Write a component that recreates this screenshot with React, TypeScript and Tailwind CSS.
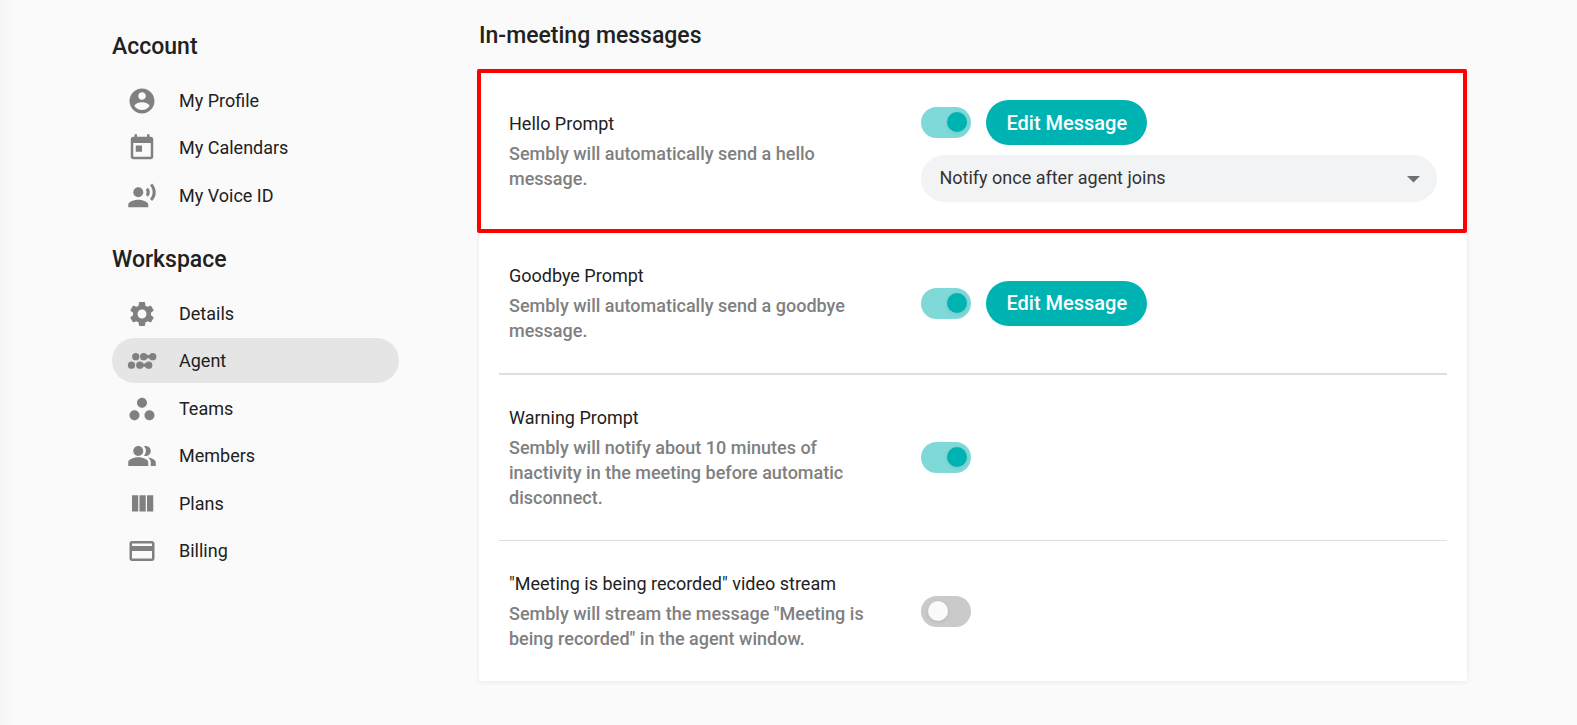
import { useState } from "react";
import type { ComponentType } from "react";
import {
  MdCreditCard,
  MdPeopleAlt,
  MdRecordVoiceOver,
  MdSettings,
  MdWorkspacesFilled,
} from "react-icons/md";

type IconProps = { className?: string };

type NavItem = {
  label: string;
  icon: ComponentType<IconProps>;
  active?: boolean;
};

function ProfileIcon({ className }: IconProps) {
  return (
    <svg viewBox="0 0 24 24" fill="currentColor" className={className}>
      <path d="M12 2C6.48 2 2 6.48 2 12s4.48 10 10 10 10-4.48 10-10S17.52 2 12 2zm0 3c1.66 0 3 1.34 3 3s-1.34 3-3 3-3-1.34-3-3 1.34-3 3-3zm0 14.2c-2.5 0-4.71-1.28-6-3.22.03-1.99 4-3.08 6-3.08 1.99 0 5.97 1.09 6 3.08-1.29 1.94-3.5 3.22-6 3.22z" />
    </svg>
  );
}

function CalendarIcon({ className }: IconProps) {
  return (
    <svg viewBox="0 0 24 24" fill="currentColor" className={className}>
      <path d="M19 3h-1V1h-2v2H8V1H6v2H5c-1.11 0-1.99.9-1.99 2L3 19c0 1.1.89 2 2 2h14c1.1 0 2-.9 2-2V5c0-1.1-.9-2-2-2zm0 16H5V8h14v11zM7 10h5v5H7z" />
    </svg>
  );
}

function AgentIcon({ className }: IconProps) {
  return (
    <svg viewBox="0 0 24 24" fill="currentColor" className={className}>
      <circle cx="7" cy="8.5" r="2.9" />
      <circle cx="13.3" cy="8.5" r="2.9" />
      <circle cx="20.6" cy="8.5" r="2.9" />
      <path d="M14.5 5.9c1 .8 1.5 1.3 2.5 1.3s1.5-.5 2.5-1.3v5.2c-1-.8-1.5-1.3-2.5-1.3s-1.5.5-2.5 1.3z" />
      <circle cx="3.6" cy="15.3" r="2.9" />
      <circle cx="10.2" cy="15.3" r="2.9" />
      <circle cx="17.4" cy="15.3" r="2.9" />
      <path d="M11.3 12.7c1 .8 1.5 1.3 2.5 1.3s1.5-.5 2.5-1.3v5.2c-1-.8-1.5-1.3-2.5-1.3s-1.5.5-2.5 1.3z" />
    </svg>
  );
}

function PlansIcon({ className }: IconProps) {
  return (
    <svg viewBox="0 0 24 24" fill="currentColor" className={className}>
      <path d="M10 18h5V5h-5v13zm-6 0h5V5H4v13zM16 5v13h5V5h-5z" />
    </svg>
  );
}

const accountItems: NavItem[] = [
  { label: "My Profile", icon: ProfileIcon },
  { label: "My Calendars", icon: CalendarIcon },
  { label: "My Voice ID", icon: MdRecordVoiceOver },
];

const workspaceItems: NavItem[] = [
  { label: "Details", icon: MdSettings },
  { label: "Agent", icon: AgentIcon, active: true },
  { label: "Teams", icon: MdWorkspacesFilled },
  { label: "Members", icon: MdPeopleAlt },
  { label: "Plans", icon: PlansIcon },
  { label: "Billing", icon: MdCreditCard },
];

function NavSection({ title, items }: { title: string; items: NavItem[] }) {
  return (
    <section>
      <h2 className="text-[23px] leading-[30px] font-medium">{title}</h2>
      <ul className="mt-4">
        {items.map(({ label, icon: Icon, active }) => (
          <li key={label} className="odd:mb-[2px] even:mb-[3px]">
            <a
              href="#"
              aria-current={active ? "page" : undefined}
              className={`flex h-[45px] items-center rounded-full pl-[15px] ${
                active ? "bg-[#e5e5e5]" : ""
              }`}
            >
              <Icon className="size-[30px] shrink-0 text-[#808080]" />
              <span className="ml-[22px] text-[18px] leading-[25px]">
                {label}
              </span>
            </a>
          </li>
        ))}
      </ul>
    </section>
  );
}

function Toggle({ label, initial }: { label: string; initial: boolean }) {
  const [on, setOn] = useState(initial);
  return (
    <input
      type="checkbox"
      role="switch"
      aria-label={label}
      checked={on}
      onChange={() => setOn(!on)}
      className="flex h-[31px] w-[50px] shrink-0 cursor-pointer appearance-none items-center rounded-full bg-[#cacaca] pb-px pl-[7px] before:size-5 before:rounded-full before:bg-[#fafafa] before:shadow-[0_1px_4px_rgba(0,0,0,0.1)] checked:bg-[#80d9d9] checked:pl-[26px] checked:before:bg-[#00b3b3]"
    />
  );
}

function EditButton() {
  return (
    <button
      type="button"
      className="h-[45px] cursor-pointer rounded-full bg-[#00b3b3] px-5 text-[20px] font-medium text-white"
    >
      Edit Message
    </button>
  );
}

type Prompt = {
  title: string;
  description: string;
  enabled: boolean;
  editable?: boolean;
  frequency?: boolean;
  highlighted?: boolean;
  row: string;
};

const prompts: Prompt[] = [
  {
    title: "Hello Prompt",
    description: "Sembly will automatically send a hello message.",
    enabled: true,
    editable: true,
    frequency: true,
    highlighted: true,
    row: "border-b",
  },
  {
    title: "Goodbye Prompt",
    description: "Sembly will automatically send a goodbye message.",
    enabled: true,
    editable: true,
    row: "border-b-2",
  },
  {
    title: "Warning Prompt",
    description:
      "Sembly will notify about 10 minutes of inactivity in the meeting before automatic disconnect.",
    enabled: true,
    row: "border-b",
  },
  {
    title: '"Meeting is being recorded" video stream',
    description:
      'Sembly will stream the message "Meeting is being recorded" in the agent window.',
    enabled: false,
    row: "",
  },
];

function PromptRow({ prompt }: { prompt: Prompt }) {
  return (
    <li className="relative px-5">
      <div
        className={`grid grid-cols-9 items-center border-[#dfdfdf] px-[10px] py-[30px] ${prompt.row}`}
      >
        <div className="col-span-4 pr-[50px] text-[18px] leading-[25px]">
          <h3>{prompt.title}</h3>
          <p className="mt-[5px] font-medium text-[#808080]">
            {prompt.description}
          </p>
        </div>
        <div className="col-span-5">
          <div className="flex items-center gap-[15px]">
            <Toggle label={prompt.title} initial={prompt.enabled} />
            {prompt.editable && <EditButton />}
          </div>
          {prompt.frequency && (
            <div className="relative mt-[10px]">
              <select
                aria-label="Notification frequency"
                className="h-[47px] w-full appearance-none rounded-full bg-[#f2f3f5] px-[18px] pb-[2px] text-[18px] text-[#333333]"
              >
                <option>Notify once after agent joins</option>
                <option>Notify every participant</option>
              </select>
              <svg
                viewBox="0 0 13 7"
                className="pointer-events-none absolute top-[21px] right-[17px] h-[7px] w-[13px] fill-[#707070]"
              >
                <path d="M0 0h13L6.5 6.5z" />
              </svg>
            </div>
          )}
        </div>
      </div>
      {/* Highlight frame over the card edge */}
      {prompt.highlighted && (
        <div className="pointer-events-none absolute -top-px right-0 bottom-0 -left-[2px] rounded-[2px] border-4 border-[#ff0000]" />
      )}
    </li>
  );
}

export default function App() {
  return (
    <div className="min-h-screen bg-[#fafafa] bg-linear-to-r from-[#f5f5f5] to-[#fafafa] to-[16px] font-[Roboto,'Liberation_Sans',sans-serif] text-[#212121]">
      <div className="flex gap-20 pr-[110px] pb-11 pl-28">
        <nav
          aria-label="Settings"
          className="flex w-[287px] shrink-0 flex-col gap-[25px] pt-8"
        >
          <NavSection title="Account" items={accountItems} />
          <NavSection title="Workspace" items={workspaceItems} />
        </nav>
        <main className="min-w-0 flex-1 pt-[21px]">
          <h1 className="text-[23px] leading-[30px] font-medium">
            In-meeting messages
          </h1>
          <ul className="mt-[19px] bg-white shadow-[0_1px_5px_rgba(0,0,0,0.08)]">
            {prompts.map((prompt) => (
              <PromptRow key={prompt.title} prompt={prompt} />
            ))}
          </ul>
        </main>
      </div>
    </div>
  );
}
